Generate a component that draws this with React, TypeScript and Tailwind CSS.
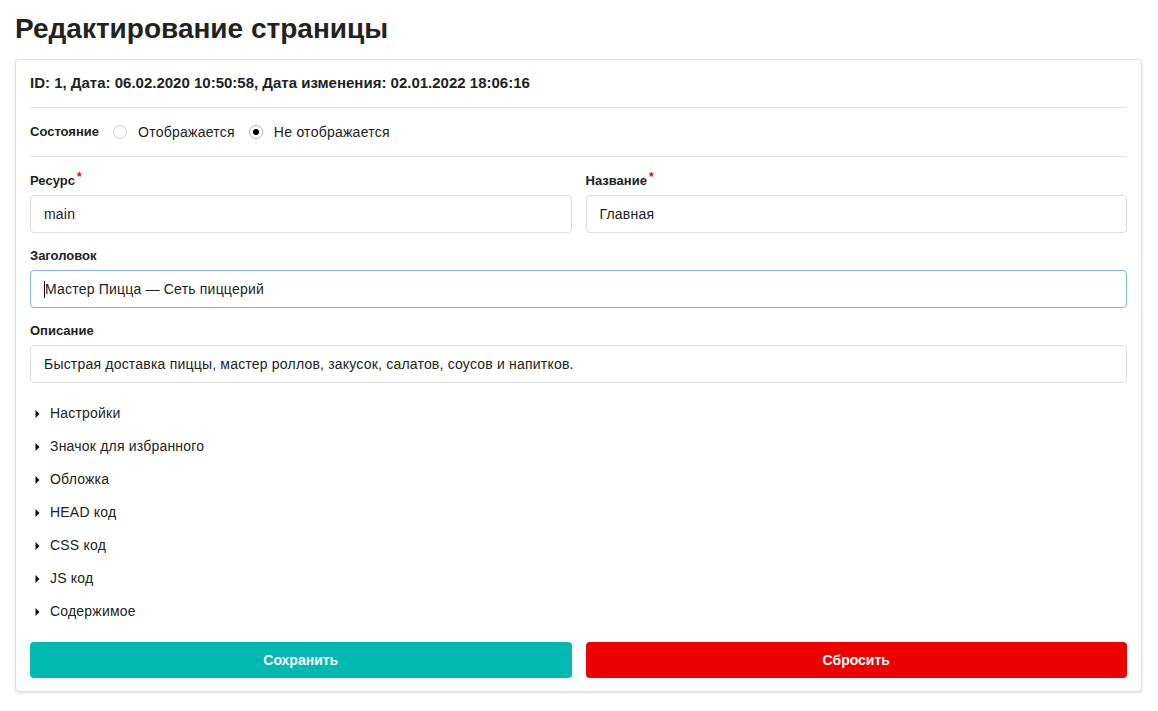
import React from "react";

/* ------------------------------------------------------------------ */
/*  Data                                                               */
/* ------------------------------------------------------------------ */

const SECTIONS = [
  "Настройки",
  "Значок для избранного",
  "Обложка",
  "HEAD код",
  "CSS код",
  "JS код",
  "Содержимое",
];

/* ------------------------------------------------------------------ */
/*  Small pieces                                                       */
/* ------------------------------------------------------------------ */

function Label({ text, required }: { text: string; required?: boolean }) {
  return (
    <div className="h-4 flex items-center text-[13px] font-bold text-[#222] leading-4">
      {text}
      {required && <span className="text-[#e00] ml-[2px] -mt-2 text-[12px]">*</span>}
    </div>
  );
}

function Field({ value, focused }: { value: string; focused?: boolean }) {
  return (
    <div
      className={
        "mt-[6px] h-[38px] rounded-[4px] border flex items-center px-[13px] text-[14px] tracking-[0.2px] text-[#222] bg-white " +
        (focused ? "border-[#7fb5e0]" : "border-[#dedede]")
      }
    >
      {focused && <span className="w-[1px] h-[17px] bg-black" />}
      {value}
    </div>
  );
}

function Radio({ checked, label }: { checked?: boolean; label: string }) {
  return (
    <span className="flex items-center gap-[11px]">
      <span
        className={
          "w-[14px] h-[14px] rounded-full border flex items-center justify-center bg-white " +
          (checked ? "border-[#b8b8b8]" : "border-[#d4d4d4]")
        }
      >
        {checked && <span className="w-[6px] h-[6px] rounded-full bg-black" />}
      </span>
      <span className="text-[14px] tracking-[0.25px] text-[#222]">{label}</span>
    </span>
  );
}

function Caret() {
  return (
    <svg width="5" height="8" viewBox="0 0 5 8" className="shrink-0">
      <path d="M0.5 0 L4.5 4 L0.5 8 Z" fill="#111" />
    </svg>
  );
}

/* ------------------------------------------------------------------ */
/*  Page                                                               */
/* ------------------------------------------------------------------ */

export default function App() {
  return (
    <div className="min-h-[711px] bg-white font-['Liberation_Sans',Arial,sans-serif] text-[#222] pt-[13px] px-[15px]">
      <h1 className="text-[28px] font-bold leading-[32px] text-[#222]">Редактирование страницы</h1>

      <div className="mt-[14px] w-[1127px] rounded-[4px] border border-[#e0e0e0] shadow-[0_1px_3px_rgba(0,0,0,0.12)] bg-white px-[14px] pt-[14px] pb-[13px]">
        <div className="h-[18px] flex items-center text-[15px] font-bold">
          ID: 1, Дата: 06.02.2020 10:50:58, Дата изменения: 02.01.2022 18:06:16
        </div>

        <div className="mt-[15px] border-t border-[#e2e2e2]" />

        <div className="mt-[14px] h-5 flex items-center gap-[14px]">
          <span className="text-[13px] font-bold">Состояние</span>
          <Radio label="Отображается" />
          <Radio checked label="Не отображается" />
        </div>

        <div className="mt-[14px] border-t border-[#e2e2e2]" />

        <div className="mt-[16px] grid grid-cols-2 gap-[14px]">
          <div>
            <Label text="Ресурс" required />
            <Field value="main" />
          </div>
          <div>
            <Label text="Название" required />
            <Field value="Главная" />
          </div>
        </div>

        <div className="mt-[15px]">
          <Label text="Заголовок" />
          <Field value="Мастер Пицца — Сеть пиццерий" focused />
        </div>

        <div className="mt-[15px]">
          <Label text="Описание" />
          <Field value="Быстрая доставка пиццы, мастер роллов, закусок, салатов, соусов и напитков." />
        </div>

        <div className="mt-[14px] flex flex-col">
          {SECTIONS.map((s) => (
            <div key={s} className="h-[33px] flex items-center gap-[10px] pl-[5px] text-[14px] tracking-[0.2px]">
              <Caret />
              <span>{s}</span>
            </div>
          ))}
        </div>

        <div className="mt-[14px] grid grid-cols-2 gap-[14px]">
          <button className="h-[36px] rounded-[4px] bg-[#00bab1] text-white text-[14px] font-bold">
            Сохранить
          </button>
          <button className="h-[36px] rounded-[4px] bg-[#ee0000] text-white text-[14px] font-bold">
            Сбросить
          </button>
        </div>
      </div>
    </div>
  );
}
